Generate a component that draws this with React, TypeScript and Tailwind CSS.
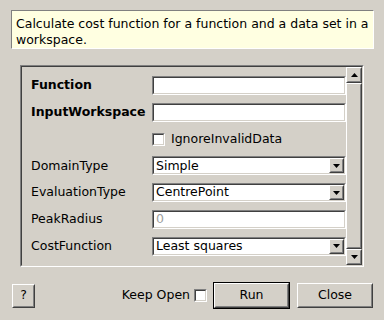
import React from 'react';

const Sunken: React.FC<{ className?: string; inner?: string; children?: React.ReactNode }> = ({ className = '', inner = '', children }) => (
  <div className={`border border-t-[#808080] border-l-[#808080] border-r-white border-b-white ${className}`}>
    <div className={`h-full w-full border border-t-[#404040] border-l-[#404040] border-r-[#d4d0c8] border-b-[#d4d0c8] ${inner}`}>
      {children}
    </div>
  </div>
);

const Raised: React.FC<{ className?: string; inner?: string; children?: React.ReactNode }> = ({ className = '', inner = '', children }) => (
  <div className={`border border-t-white border-l-white border-r-[#404040] border-b-[#404040] bg-[#d4d0c8] ${className}`}>
    <div className={`h-full w-full border border-t-[#d4d0c8] border-l-[#d4d0c8] border-r-[#808080] border-b-[#808080] flex items-center justify-center ${inner}`}>
      {children}
    </div>
  </div>
);

const Arrow: React.FC<{ up?: boolean }> = ({ up }) => (
  <svg width="7" height="4" viewBox="0 0 7 4">
    {up ? <polygon points="3.5,0 7,4 0,4" fill="#000" /> : <polygon points="0,0 7,0 3.5,4" fill="#000" />}
  </svg>
);

const TextField: React.FC<{ value?: string; disabled?: boolean }> = ({ value = '', disabled }) => (
  <Sunken className="h-[19px] w-[194px]" inner="bg-white flex items-center pl-[2px]">
    <span className={disabled ? 'text-[#a0a0a0]' : ''}>{value}</span>
  </Sunken>
);

const Combo: React.FC<{ value: string }> = ({ value }) => (
  <Sunken className="h-[19px] w-[194px]" inner="bg-white flex items-center">
    <span className="flex-1 pl-[2px]">{value}</span>
    <Raised className="h-full w-[15px]">
      <Arrow />
    </Raised>
  </Sunken>
);

const Row: React.FC<{ label: string; bold?: boolean; children: React.ReactNode }> = ({ label, bold, children }) => (
  <div className="flex items-center h-[19px]">
    <span className={`w-[121px] whitespace-nowrap ${bold ? 'font-bold' : ''}`}>{label}</span>
    {children}
  </div>
);

export default function App() {
  return (
    <div className="w-[384px] h-[320px] bg-[#d4d0c8] font-['DejaVu_Sans',sans-serif] text-[12.5px] text-black overflow-hidden">
      {/* description */}
      <div className="ml-[11px] mt-[10px] w-[363px] h-[39px] border border-t-[#808080] border-l-[#808080] border-b-white border-r-white bg-[#ffffe1] px-[4px] pt-[5px] leading-[16px] whitespace-nowrap">
        Calculate cost function for a function and a data set in a
        <br />
        workspace.
      </div>

      {/* property frame */}
      <Sunken className="ml-[20px] mt-[16px] w-[344px] h-[202px]" inner="flex">
        <div className="flex-1 flex flex-col gap-[7.8px] pt-[9px] pl-[9px]">
          <Row label="Function" bold>
            <TextField />
          </Row>
          <Row label="InputWorkspace" bold>
            <TextField />
          </Row>
          <Row label="">
            <Sunken className="h-[13px] w-[13px]" inner="bg-white" />
            <span className="ml-[6px]">IgnoreInvalidData</span>
          </Row>
          <Row label="DomainType">
            <Combo value="Simple" />
          </Row>
          <Row label="EvaluationType">
            <Combo value="CentrePoint" />
          </Row>
          <Row label="PeakRadius">
            <TextField value="0" disabled />
          </Row>
          <Row label="CostFunction">
            <Combo value="Least squares" />
          </Row>
        </div>
        <div className="w-[16px] flex flex-col">
          <Raised className="h-[16px] w-[16px]">
            <Arrow up />
          </Raised>
          <Raised className="flex-1 w-[16px]" />
          <Raised className="h-[16px] w-[16px]">
            <Arrow />
          </Raised>
        </div>
      </Sunken>

      {/* buttons */}
      <div className="flex items-center mt-[15px] pl-[12px] pr-[11px]">
        <Raised className="w-[23px] h-[24px]">?</Raised>
        <div className="flex-1" />
        <span>Keep Open</span>
        <Sunken className="ml-[4px] h-[13px] w-[13px]" inner="bg-white" />
        <div className="ml-[6px] border border-black">
          <Raised className="w-[75px] h-[25px]">Run</Raised>
        </div>
        <Raised className="ml-[7px] w-[76px] h-[25px]">Close</Raised>
      </div>
    </div>
  );
}
